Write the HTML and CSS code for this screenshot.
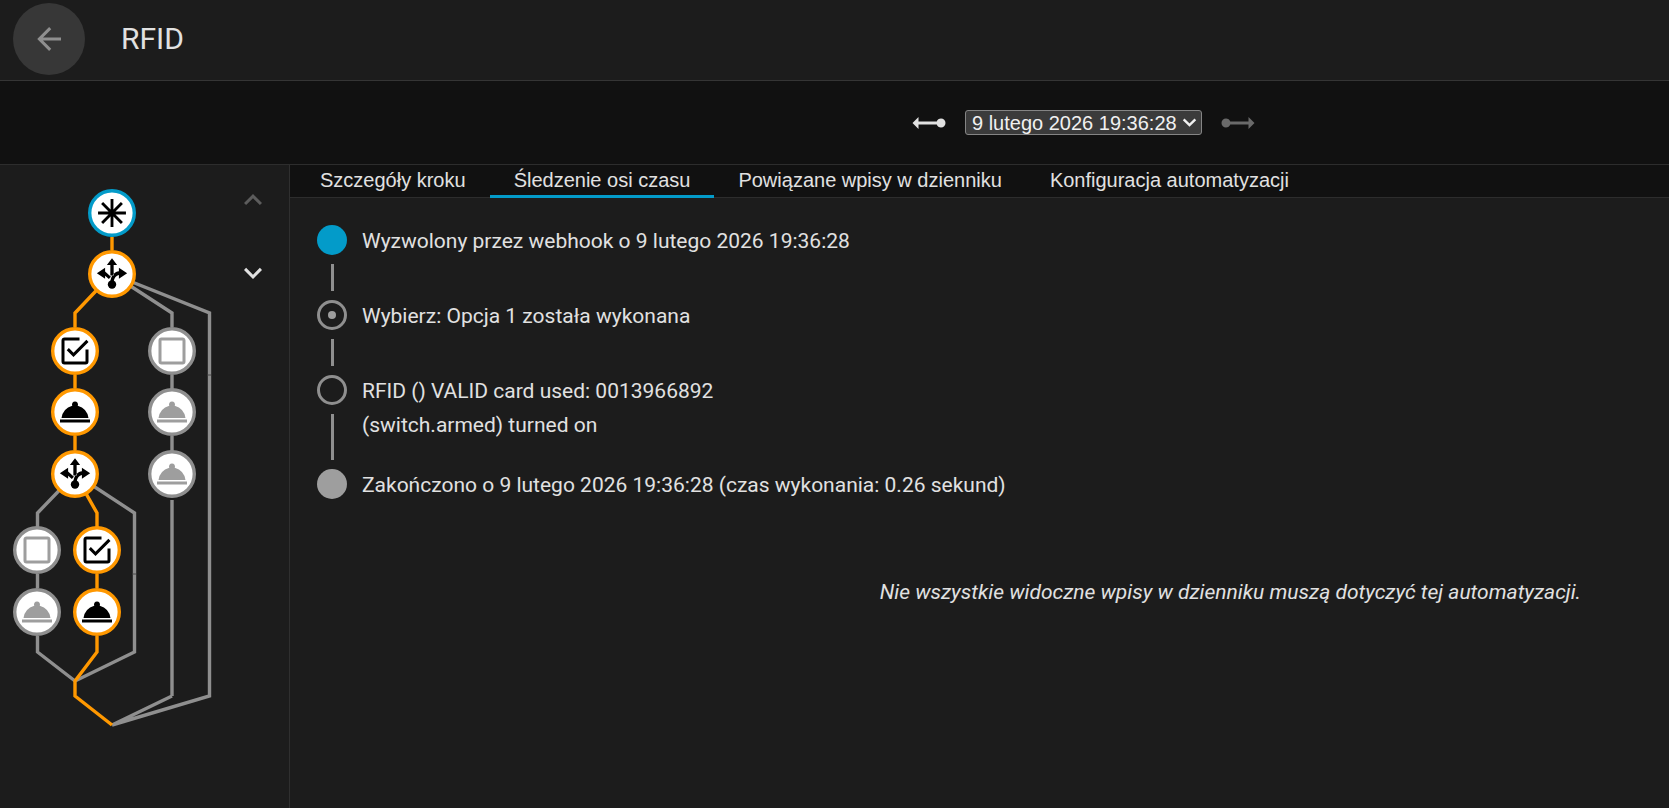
FILE: index.html
```html
<!DOCTYPE html>
<html lang="pl">
<head>
<meta charset="utf-8">
<title>RFID</title>
<link rel="stylesheet" href="styles.css">
</head>
<body>
<svg class="defs" width="0" height="0" aria-hidden="true">
  <symbol id="i-trigger" viewBox="0 0 24 24"><path d="M12 2.700V21.300M2.700 12H21.300M5.400 5.400L18.600 18.600M18.600 5.400L5.400 18.600" fill="none" stroke="currentColor" stroke-width="1.900"/></symbol>
  <symbol id="i-choose" viewBox="0 0 24 24"><path d="M12 1.500L15.400 6H13.100V13H10.900V6H8.600Z M1.900 11.500L7.400 7.800V10.300L11.300 13.800L9.900 15.300L7.400 13.200V15.200Z M22.100 11.500L16.600 7.800V10.200C14 10.500 11.500 12.500 10.900 17H13.100C13.500 14.600 14.800 13 16.600 12.700V15.200Z" fill="currentColor"/><circle cx="12" cy="19" r="2.800" fill="currentColor"/></symbol>
  <symbol id="i-checked" viewBox="0 0 24 24"><path d="M19,19H5V5H15V3H5C3.890,3 3,3.890 3,5V19A2,2 0 0,0 5,21H19A2,2 0 0,0 21,19V11H19M7.910,10.080L6.500,11.500L11,16L21,6L19.590,4.580L11,13.170L7.910,10.080Z" fill="currentColor"/></symbol>
  <symbol id="i-blank" viewBox="0 0 24 24"><path d="M19,3H5C3.890,3 3,3.890 3,5V19A2,2 0 0,0 5,21H19A2,2 0 0,0 21,19V5C21,3.890 20.100,3 19,3M19,5V19H5V5H19Z" fill="currentColor"/></symbol>
  <symbol id="i-service" viewBox="0 0 24 24"><path d="M2 17H22V19H2V17M13.840 7.790A2 2 0 1 0 10.160 7.790A10 10 0 0 0 3 16H21A10 10 0 0 0 13.840 7.790Z" fill="currentColor"/></symbol>
</svg>

<header class="topbar">
  <button class="back" type="button" aria-label="Wstecz">
    <svg class="icon36" viewBox="0 0 24 24"><path d="M20,11V13H8L13.500,18.500L12.080,19.920L4.160,12L12.080,4.080L13.500,5.500L8,11H20Z" fill="currentColor"/></svg>
  </button>
  <h1 class="title">RFID</h1>
</header>

<div class="runbar">
  <svg class="icon36 ray-on" viewBox="0 0 24 24"><path d="M1,12L5,16V13H17.170C17.580,14.170 18.690,15 20,15A3,3 0 0,0 23,12A3,3 0 0,0 20,9C18.690,9 17.580,9.830 17.170,11H5V8L1,12Z" fill="currentColor"/></svg>
  <div class="select-wrap">
    <select class="run-select" aria-label="Uruchomienie">
      <option>9 lutego 2026 19:36:28</option>
    </select>
    <svg class="select-chevron" viewBox="0 0 16 10"><path d="M1.500 1.500L8 8L14.500 1.500" fill="none" stroke="currentColor" stroke-width="2.600"/></svg>
  </div>
  <svg class="icon36 ray-off" viewBox="0 0 24 24"><path d="M4,9C5.310,9 6.420,9.830 6.830,11H19V8L23,12L19,16V13H6.830C6.420,14.170 5.310,15 4,15A3,3 0 0,1 1,12A3,3 0 0,1 4,9Z" fill="currentColor"/></svg>
</div>

<main class="layout">
  <aside class="graph-pane">
    <svg class="graph" width="235" height="643" viewBox="0 165 235 643">
      <g class="edge off">
        <path d="M112 274L172 313V327M112 274L209.500 313V696L112 725M172 696L112 725M172 500V696"/>
        <path d="M172 375V390M172 436V451"/>
        <path d="M75 474L37.500 513V527M75 474L134.500 513V652L75 681M37.500 574V588M37.500 636V652L75 681"/>
        <path d="M207.500 375H211M132.500 574H136" class="notch"/>
      </g>
      <g class="edge on">
        <path d="M112 237V250M112 274L75 313V327M75 375V388M75 436V450M75 474L97 513V527M97 574V588M97 636V652L75 681V696L112 725"/>
      </g>

      <g class="node blue"><circle cx="112" cy="213" r="22.300"/><use href="#i-trigger" x="94" y="195" width="36" height="36"/></g>
      <g class="node orange"><circle cx="112" cy="274" r="22.300"/><use href="#i-choose" x="94" y="256" width="36" height="36"/></g>

      <g class="node orange"><circle cx="75" cy="351" r="22.300"/><use href="#i-checked" x="57" y="333" width="36" height="36"/></g>
      <g class="node orange"><circle cx="75" cy="412" r="22.300"/><use href="#i-service" x="57" y="394" width="36" height="36"/></g>
      <g class="node orange"><circle cx="75" cy="474" r="22.300"/><use href="#i-choose" x="57" y="456" width="36" height="36"/></g>

      <g class="node grey"><circle cx="172" cy="351" r="22.300"/><use href="#i-blank" x="154" y="333" width="36" height="36"/></g>
      <g class="node grey"><circle cx="172" cy="412" r="22.300"/><use href="#i-service" x="154" y="394" width="36" height="36"/></g>
      <g class="node grey"><circle cx="172" cy="474" r="22.300"/><use href="#i-service" x="154" y="456" width="36" height="36"/></g>

      <g class="node grey"><circle cx="37" cy="550" r="22.300"/><use href="#i-blank" x="19" y="532" width="36" height="36"/></g>
      <g class="node grey"><circle cx="37" cy="612" r="22.300"/><use href="#i-service" x="19" y="594" width="36" height="36"/></g>
      <g class="node orange"><circle cx="97" cy="550" r="22.300"/><use href="#i-checked" x="79" y="532" width="36" height="36"/></g>
      <g class="node orange"><circle cx="97" cy="612" r="22.300"/><use href="#i-service" x="79" y="594" width="36" height="36"/></g>
    </svg>
    <div class="steppers">
      <svg class="icon36 step-off" viewBox="0 0 24 24"><path d="M7.410,15.410L12,10.830L16.590,15.410L18,14L12,8L6,14L7.410,15.410Z" fill="currentColor"/></svg>
      <svg class="icon36 step-on" viewBox="0 0 24 24"><path d="M7.410,8.580L12,13.170L16.590,8.580L18,10L12,16L6,10L7.410,8.580Z" fill="currentColor"/></svg>
    </div>
  </aside>

  <section class="content">
    <nav class="tabs">
      <div class="tab">Szczegóły kroku</div>
      <div class="tab active">Śledzenie osi czasu</div>
      <div class="tab">Powiązane wpisy w dzienniku</div>
      <div class="tab">Konfiguracja automatyzacji</div>
    </nav>

    <div class="timeline">
      <div class="entry">
        <div class="rail"><span class="dot dot-start"></span><span class="rail-line short"></span></div>
        <div class="entry-text"><div>Wyzwolony przez webhook o 9 lutego 2026 19:36:28</div></div>
      </div>
      <div class="entry">
        <div class="rail"><span class="dot dot-ring dot-inner"></span><span class="rail-line short"></span></div>
        <div class="entry-text"><div>Wybierz: Opcja 1 została wykonana</div></div>
      </div>
      <div class="entry">
        <div class="rail"><span class="dot dot-ring"></span><span class="rail-line tall"></span></div>
        <div class="entry-text"><div>RFID () VALID card used: 0013966892</div><div>(switch.armed) turned on</div></div>
      </div>
      <div class="entry">
        <div class="rail"><span class="dot dot-end"></span></div>
        <div class="entry-text"><div>Zakończono o 9 lutego 2026 19:36:28 (czas wykonania: 0.26 sekund)</div></div>
      </div>
    </div>

    <p class="note">Nie wszystkie widoczne wpisy w dzienniku muszą dotyczyć tej automatyzacji.</p>
  </section>
</main>
</body>
</html>
```

FILE: styles.css
```css
* { box-sizing: border-box; }
html { height: 808px; overflow: hidden; }
body {
  margin: 0;
  height: 808px;
  overflow: hidden;
  display: flex;
  flex-direction: column;
  background: #1c1c1c;
  color: #e1e1e1;
  font-family: Roboto, sans-serif;
}
.defs { position: absolute; }
.icon36 { width: 36px; height: 36px; display: block; flex: none; }

.topbar {
  flex: none;
  height: 81px;
  display: flex;
  align-items: center;
  padding-left: 13px;
  border-bottom: 1px solid #353535;
  background: #1c1c1c;
}
.back {
  width: 72px;
  height: 72px;
  margin: -3px 0 0;
  padding: 0;
  border: 0;
  border-radius: 50%;
  background: #373737;
  color: #8f8f8f;
  display: flex;
  align-items: center;
  justify-content: center;
}
.title {
  margin: -3px 0 0 36px;
  font-size: 30px;
  font-weight: 400;
  line-height: 36px;
  color: #e1e1e1;
}

.runbar {
  flex: none;
  height: 84px;
  display: flex;
  align-items: center;
  padding: 0 0 0 911px;
  background: #111111;
  border-bottom: 1px solid #2d2d2d;
}
.ray-on { color: #e1e1e1; margin-right: 18px; }
.ray-off { color: #6a6a6a; margin-left: 18px; }
.select-wrap { position: relative; width: 237px; height: 25px; }
.run-select {
  appearance: none;
  display: block;
  width: 100%;
  height: 100%;
  padding: 0 0 0 6px;
  border: 1px solid #858585;
  border-radius: 3px;
  background: #3b3b3b;
  font-family: "Liberation Sans", Arial, sans-serif;
  font-size: 20px;
  color: #f0f0f0;
}
.select-chevron {
  position: absolute;
  right: 5px;
  top: 8px;
  width: 15px;
  height: 9px;
  color: #f0f0f0;
  pointer-events: none;
}

.layout { flex: 1; display: flex; min-height: 0; }
.graph-pane {
  flex: none;
  width: 290px;
  display: flex;
  border-right: 1px solid #2f2f2f;
}
.graph { display: block; flex: none; }
.steppers {
  display: flex;
  flex-direction: column;
  gap: 37px;
  padding-top: 17px;
}
.step-off { color: #5c5c5c; }
.step-on { color: #e1e1e1; }

.edge path { fill: none; stroke-width: 3.400; }
.edge.off path { stroke: #8f8f8f; }
.edge.on path { stroke: #ff9800; }
.edge .notch { stroke-width: 1 !important; stroke: #4a4a4a !important; }
.node circle { fill: #ffffff; stroke-width: 3.400; }
.node.blue circle { stroke: #039bc9; }
.node.orange circle { stroke: #ff9800; }
.node.grey circle { stroke: #8f8f8f; }
.node.blue, .node.orange { color: #000000; }
.node.grey { color: #9e9e9e; }

.content { flex: 1; min-width: 0; display: flex; flex-direction: column; }
.tabs {
  flex: none;
  height: 33px;
  display: flex;
  padding-left: 6px;
  background: #111111;
  border-bottom: 1px solid #2d2d2d;
}
.tab {
  padding: 0 24px;
  height: 33px;
  line-height: 30px;
  font-family: "Liberation Sans", Arial, sans-serif;
  font-size: 20px;
  color: #e1e1e1;
}
.tab.active { border-bottom: 3px solid #039bc9; }

.timeline { padding: 27px 0 0 27px; }
.entry { display: flex; gap: 15px; }
.rail { width: 30px; flex: none; display: flex; flex-direction: column; align-items: center; }
.dot { width: 30px; height: 30px; border-radius: 50%; flex: none; display: flex; align-items: center; justify-content: center; }
.dot-start { background: #039bc9; }
.dot-end { background: #9e9e9e; }
.dot-ring { border: 3px solid #8f8f8f; }
.dot-inner::after { content: ""; width: 8px; height: 8px; border-radius: 50%; background: #9e9e9e; }
.rail-line { width: 3px; background: #8f8f8f; margin: 9px 0; flex: none; }
.rail-line.short { height: 27px; }
.rail-line.tall { height: 46px; }
.entry-text { font-size: 21px; line-height: 34px; margin-top: -1px; color: #e1e1e1; }

.note {
  margin: 73px 88px 0 0;
  text-align: right;
  font-size: 21px;
  font-style: italic;
  line-height: 34px;
  color: #e1e1e1;
}
```
